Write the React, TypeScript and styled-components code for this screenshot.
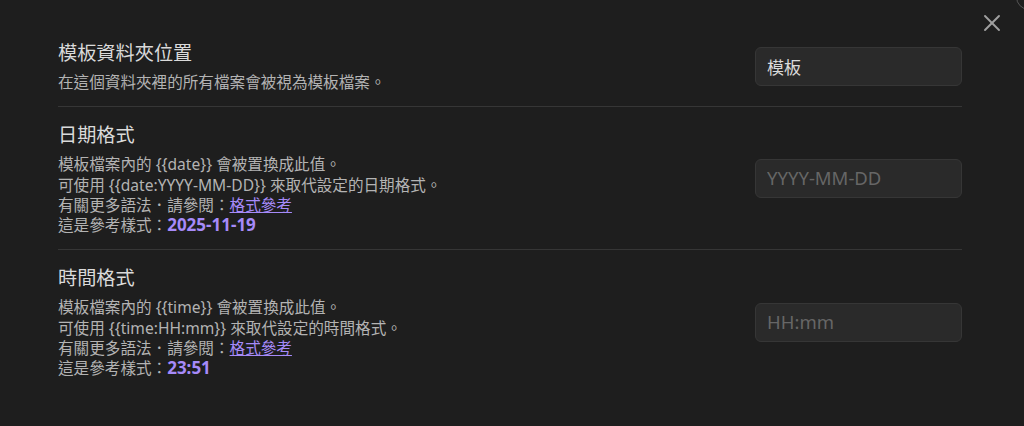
import { FC } from "react";
import styled, { createGlobalStyle } from "styled-components";

const GlobalStyle = createGlobalStyle`
    html, body {
        margin: 0;
        padding: 0;
        background: #1e1e1e;
    }
    body {
        font-family: "Noto Sans", "Noto Sans CJK TC", sans-serif;
        color: #dadada;
    }
`;

const Modal = styled.div`
    position: relative;
    width: 1024px;
    height: 426px;
    box-sizing: border-box;
    padding: 25px 62px 0 58px;
    background: #1e1e1e;
    overflow: hidden;
`;

const CloseButton = styled.button`
    position: absolute;
    top: 9px;
    right: 18px;
    width: 28px;
    height: 28px;
    padding: 0;
    border: none;
    background: transparent;
    color: #a0a0a0;
    display: flex;
    align-items: center;
    justify-content: center;
`;

const Corner = styled.div`
    position: absolute;
    top: -16px;
    right: -18px;
    width: 24px;
    height: 24px;
    border: 1px solid #555555;
    border-radius: 50%;
`;

const SettingItem = styled.div<{ $first?: boolean }>`
    display: flex;
    align-items: center;
    gap: 24px;
    padding: 15px 0 14px;
    border-top: ${(p) => (p.$first ? "none" : "1px solid #363636")};
`;

const Info = styled.div`
    flex: 1;
    min-width: 0;
`;

const Name = styled.div`
    font-size: 19.2px;
    line-height: 25px;
    color: #dadada;
`;

const Description = styled.div`
    padding-top: 7px;
    font-size: 15.6px;
    line-height: 20.3px;
    color: #b3b3b3;
`;

const Link = styled.a`
    color: #a68af9;
    text-decoration: underline;
    text-underline-offset: 1px;
`;

const Sample = styled.b`
    color: #a68af9;
    font-size: 17px;
    line-height: 1;
    font-weight: 700;
`;

const TextInput = styled.input`
    width: 207px;
    height: 39px;
    box-sizing: border-box;
    padding: 0 11px;
    background: #2a2a2a;
    border: 1px solid #363636;
    border-radius: 6px;
    color: #dadada;
    font-family: "Noto Sans", "Noto Sans CJK TC", sans-serif;
    font-size: 17px;
    outline: none;

    &::placeholder {
        color: #666666;
        font-size: 18.5px;
    }
`;

interface IFormatSetting {
    name: string;
    token: string;
    example: string;
    kind: string;
    sample: string;
    placeholder: string;
}

const FormatSetting: FC<IFormatSetting> = ({ name, token, example, kind, sample, placeholder }) => (
    <SettingItem>
        <Info>
            <Name>{name}</Name>
            <Description>
                模板檔案內的 {`{{${token}}}`} 會被置換成此值。
                <br />
                可使用 {`{{${token}:${example}}}`} 來取代設定的{kind}格式。
                <br />
                有關更多語法．請參閱：<Link href="#">格式參考</Link>
                <br />
                這是參考樣式：<Sample>{sample}</Sample>
            </Description>
        </Info>
        <TextInput placeholder={placeholder} />
    </SettingItem>
);

const App: FC = () => (
    <>
        <GlobalStyle />
        <Modal lang="zh-Hant">
            <Corner />
            <CloseButton aria-label="Close">
                <svg width="28" height="28" viewBox="0 0 24 24" fill="none" stroke="currentColor" strokeWidth="1.6" strokeLinecap="round">
                    <path d="M18 6 6 18" />
                    <path d="m6 6 12 12" />
                </svg>
            </CloseButton>

            <SettingItem $first>
                <Info>
                    <Name>模板資料夾位置</Name>
                    <Description>在這個資料夾裡的所有檔案會被視為模板檔案。</Description>
                </Info>
                <TextInput defaultValue="模板" />
            </SettingItem>

            <FormatSetting
                name="日期格式"
                token="date"
                example="YYYY-MM-DD"
                kind="日期"
                sample="2025-11-19"
                placeholder="YYYY-MM-DD"
            />

            <FormatSetting
                name="時間格式"
                token="time"
                example="HH:mm"
                kind="時間"
                sample="23:51"
                placeholder="HH:mm"
            />
        </Modal>
    </>
);

export default App;
